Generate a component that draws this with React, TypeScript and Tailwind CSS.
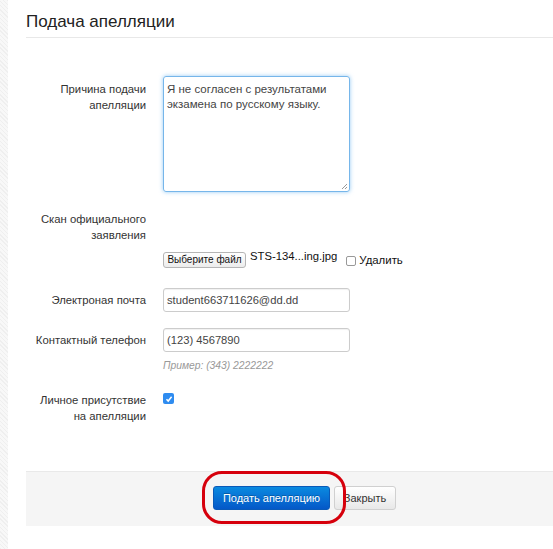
import React from 'react';

function Label({ children }: { children: React.ReactNode }) {
  return (
    <div className="text-right text-[11.3px] leading-[16px] text-[#333]">{children}</div>
  );
}

function App() {
  return (
    <div className="flex min-h-[549px] bg-white font-['Liberation_Sans',Arial,sans-serif]">
      <div className="w-[8px] shrink-0 bg-[#f3f3f3] bg-[repeating-linear-gradient(45deg,#efefef_0px,#efefef_1px,#f8f8f8_1px,#f8f8f8_3px)]" />
      <div className="flex-1 pl-[18px]">
        <div className="border-b border-[#e8e8e8] pt-[12px] pb-[5px]">
          <h1 className="text-[17px] leading-[20px] text-[#222]">Подача апелляции</h1>
        </div>

        <div className="grid grid-cols-[120px_1fr] gap-x-[17px] pt-[38px]">
          {/* reason */}
          <div className="pt-[5px]">
            <Label>
              Причина подачи
              <br />
              апелляции
            </Label>
          </div>
          <div>
            <div className="relative h-[116px] w-[187px] rounded-[3px] border border-[#76b6ea] px-[3px] py-[5px] text-[11.5px] leading-[15px] text-[#444] shadow-[0_0_4px_rgba(82,168,236,0.6)]">
              Я не согласен с результатами
              <br />
              экзамена по русскому языку.
              <svg className="absolute right-[1px] bottom-[1px]" width="7" height="7" viewBox="0 0 7 7">
                <path d="M6 1L1 6M6 4L4 6" stroke="#999" strokeWidth="1" />
              </svg>
            </div>
          </div>

          {/* scan */}
          <div className="mt-[19px]">
            <Label>
              Скан официального
              <br />
              заявления
            </Label>
          </div>
          <div className="mt-[60px] flex items-start">
            <button className="h-[16px] w-[83px] rounded-[3px] border border-[#b5b5b5] bg-[linear-gradient(#ffffff,#ececec)] text-[10px] leading-[14px] text-[#111]">
              Выберите файл
            </button>
            <span className="ml-[4px] -mt-[3px] text-[11.3px] leading-[14px] text-[#111]">STS-134...ing.jpg</span>
            <span className="ml-[9px] mt-[4px] h-[10px] w-[10px] rounded-[2px] border border-[#999] bg-white" />
            <span className="ml-[3px] mt-[1px] text-[11.4px] leading-[14px] text-[#111]">Удалить</span>
          </div>

          {/* email */}
          <div className="mt-[20px] text-right text-[11.3px] leading-[24px] text-[#333]">Электроная почта</div>
          <div className="mt-[20px]">
            <div className="h-[24px] w-[187px] rounded-[3px] border border-[#cccccc] px-[3px] text-[11.2px] leading-[22px] text-[#444] shadow-[inset_0_1px_1px_rgba(0,0,0,0.06)]">
              student663711626@dd.dd
            </div>
          </div>

          {/* phone */}
          <div className="mt-[16px] text-right text-[11.3px] leading-[24px] text-[#333]">Контактный телефон</div>
          <div className="mt-[16px]">
            <div className="h-[24px] w-[187px] rounded-[3px] border border-[#cccccc] px-[3px] text-[11.2px] leading-[22px] text-[#444] shadow-[inset_0_1px_1px_rgba(0,0,0,0.06)]">
              (123) 4567890
            </div>
            <div className="mt-[7px] text-[10.3px] italic leading-[14px] text-[#999]">Пример: (343) 2222222</div>
          </div>

          {/* presence */}
          <div className="mt-[19px]">
            <Label>
              Личное присутствие
              <br />
              на апелляции
            </Label>
          </div>
          <div className="mt-[19px]">
            <span className="mt-[1px] flex h-[11px] w-[11px] items-center justify-center rounded-[2px] bg-[#2f8cf0]">
              <svg width="8" height="8" viewBox="0 0 8 8">
                <path d="M1.5 4.2L3.2 6L6.6 1.8" fill="none" stroke="#fff" strokeWidth="1.5" />
              </svg>
            </span>
          </div>
        </div>

        <div className="relative mt-[47px] flex h-[55px] items-start border-t border-[#e9e9e9] bg-[#f5f5f5] pt-[14px] pl-[187px]">
          <button className="h-[24px] w-[117px] rounded-[3px] border border-[#0a5ab8] bg-[linear-gradient(#0a8ae0,#0458c8)] text-[11px] text-white [text-shadow:0_-1px_0_rgba(0,0,0,0.25)]">
            Подать апелляцию
          </button>
          <button className="ml-[4px] h-[24px] w-[62px] rounded-[3px] border border-[#d0d0d0] bg-[linear-gradient(#ffffff,#e8e8e8)] text-[11px] text-[#333]">
            Закрыть
          </button>
          <div className="pointer-events-none absolute -top-[1px] left-[176px] h-[53px] w-[144px] rounded-[20px] border-[3px] border-[#d6000c]" />
        </div>
      </div>
    </div>
  );
}

export default App;
